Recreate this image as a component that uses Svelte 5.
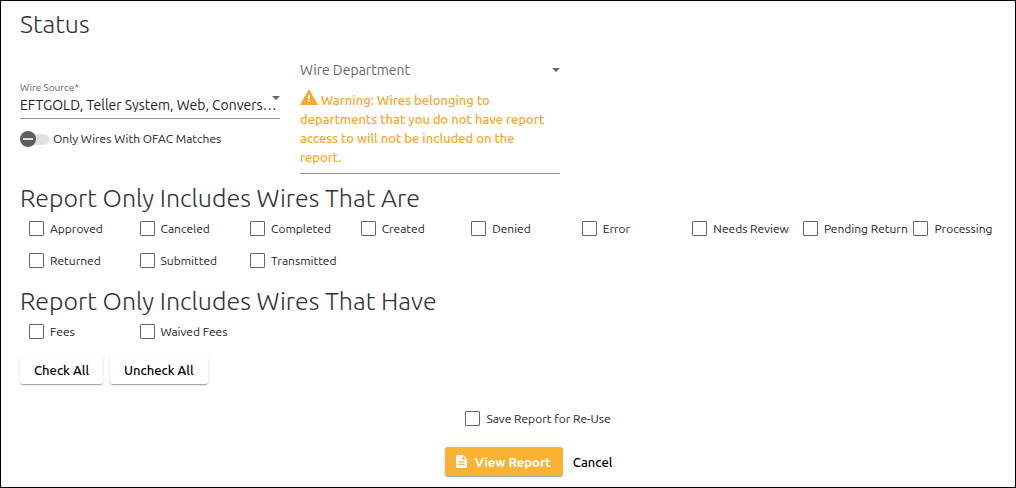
<script>
    let wireSource = $state("all");
    let wireDepartment = $state("");
    let ofacOnly = $state(false);
    let saveReport = $state(false);

    let statuses = $state([
        { id: "approved", name: "Approved", checked: false },
        { id: "canceled", name: "Canceled", checked: false },
        { id: "completed", name: "Completed", checked: false },
        { id: "created", name: "Created", checked: false },
        { id: "denied", name: "Denied", checked: false },
        { id: "error", name: "Error", checked: false },
        { id: "needsReview", name: "Needs Review", checked: false },
        { id: "pendingReturn", name: "Pending Return", checked: false },
        { id: "processing", name: "Processing", checked: false },
        { id: "returned", name: "Returned", checked: false },
        { id: "submitted", name: "Submitted", checked: false },
        { id: "transmitted", name: "Transmitted", checked: false }
    ]);

    let feeTypes = $state([
        { id: "fees", name: "Fees", checked: false },
        { id: "waivedFees", name: "Waived Fees", checked: false }
    ]);

    function setAll(value) {
        statuses.forEach((s) => (s.checked = value));
        feeTypes.forEach((f) => (f.checked = value));
    }
</script>

{#snippet arrow()}
    <svg class="arrow" viewBox="0 0 8 4" aria-hidden="true"><path d="M0 0h8L4 4z" /></svg>
{/snippet}

<main class="report">
    <h2>Status</h2>

    <div class="filters">
        <div class="filter source">
            <label class="floating" for="wireSource">Wire Source*</label>
            <div class="selectBox">
                <select id="wireSource" bind:value={wireSource}>
                    <option value="all">EFTGOLD, Teller System, Web, Conversion</option>
                </select>
                {@render arrow()}
            </div>
            <label class="toggle">
                <input type="checkbox" role="switch" bind:checked={ofacOnly} />
                <span>Only Wires With OFAC Matches</span>
            </label>
        </div>

        <div class="filter department">
            <div class="selectBox">
                <select id="wireDepartment" aria-label="Wire Department" bind:value={wireDepartment}>
                    <option value="">Wire Department</option>
                </select>
                {@render arrow()}
            </div>
            <p class="warning">
                <svg viewBox="0 0 18 16" aria-hidden="true">
                    <path fill="#f9a72b" d="M9 0l9 16H0z" />
                    <path fill="#fff" d="M8 6h2v4H8zM8 11h2v2H8z" />
                </svg>
                Warning: Wires belonging to departments that you do not have report access to will not be included on the report.
            </p>
        </div>
    </div>

    <h2 id="statusHeading">Report Only Includes Wires That Are</h2>
    <div class="checks" role="group" aria-labelledby="statusHeading">
        {#each statuses as status (status.id)}
            <label class="check">
                <input type="checkbox" bind:checked={status.checked} />
                <span>{status.name}</span>
            </label>
        {/each}
    </div>

    <h2 id="feeHeading">Report Only Includes Wires That Have</h2>
    <div class="checks fees" role="group" aria-labelledby="feeHeading">
        {#each feeTypes as fee (fee.id)}
            <label class="check">
                <input type="checkbox" bind:checked={fee.checked} />
                <span>{fee.name}</span>
            </label>
        {/each}
    </div>

    <div class="bulk">
        <button type="button" class="raised" onclick={() => setAll(true)}>Check All</button>
        <button type="button" class="raised" onclick={() => setAll(false)}>Uncheck All</button>
    </div>

    <div class="footer">
        <label class="check">
            <input type="checkbox" bind:checked={saveReport} />
            <span>Save Report for Re-Use</span>
        </label>
        <div class="actions">
            <button type="button" class="raised primary">
                <svg viewBox="0 0 11 13" aria-hidden="true">
                    <path fill="#fff" d="M1.5 0H7l4 4v7.5A1.5 1.5 0 0 1 9.5 13h-8A1.5 1.5 0 0 1 0 11.5v-10A1.5 1.5 0 0 1 1.5 0z" />
                    <path fill="#f9b233" d="M6.3 1v3.7H10zM2.5 6.2h6v1.2h-6zM2.5 8.8h6V10h-6z" />
                </svg>
                View Report
            </button>
            <button type="button" class="flat">Cancel</button>
        </div>
    </div>
</main>

<style>
    :global(body) {
        margin: 0;
        background: #fff;
    }

    .report {
        box-sizing: border-box;
        min-height: 100vh;
        border: 1px solid #000;
        padding: 9px 0 8px 19px;
        font-family: Ubuntu, "Noto Sans", "Open Sans", sans-serif;
        font-size: 12px;
        color: #212121;
    }

    h2 {
        margin: 0;
        font-size: 25px;
        font-weight: 300;
        line-height: 28px;
        color: #333;
    }

    .filters {
        display: flex;
        align-items: flex-start;
        gap: 20px;
        margin-bottom: 10px;
    }

    .filter {
        flex: 0 1 260px;
        min-width: 0;
    }

    .source {
        padding-top: 43px;
    }

    .floating {
        display: block;
        font-size: 10px;
        line-height: 14px;
        color: #666;
    }

    .selectBox {
        position: relative;
    }

    .source .selectBox {
        border-bottom: 1px solid #949494;
    }

    select {
        appearance: none;
        display: block;
        width: 100%;
        height: 20px;
        margin: 0;
        padding: 0 2px 0 0;
        border: 0;
        background: transparent;
        font: inherit;
        font-size: 14px;
        line-height: 20px;
        color: #212121;
        text-overflow: ellipsis;
        overflow: hidden;
        white-space: nowrap;
    }

    .source select {
        height: 23px;
        padding-bottom: 6px;
    }

    .arrow {
        position: absolute;
        right: 0;
        top: 8px;
        width: 8px;
        height: 4px;
        fill: #666;
        pointer-events: none;
    }

    .source .arrow {
        top: 1px;
    }

    .toggle {
        display: inline-flex;
        align-items: center;
        gap: 4px;
        margin-top: 12px;
        line-height: 16px;
    }

    .toggle input {
        appearance: none;
        position: relative;
        width: 29px;
        height: 11px;
        margin: 0;
        border-radius: 6px;
        background: #e0e0e0;
    }

    .toggle input::before {
        content: "";
        position: absolute;
        left: 0;
        top: -3px;
        width: 16px;
        height: 16px;
        border-radius: 50%;
        background: linear-gradient(#e0e0e0, #e0e0e0) center / 10px 2px no-repeat #5f5f5f;
    }

    .toggle input:checked::before {
        left: 12px;
    }

    .department {
        padding-top: 22px;
        border-bottom: 1px solid #949494;
    }

    .department select {
        color: #666;
    }

    .warning {
        margin: 0;
        padding: 9px 6px 6px 0;
        font-size: 13px;
        font-weight: 500;
        line-height: 19px;
        color: #f9a72b;
    }

    .warning svg {
        width: 18px;
        height: 16px;
    }

    .checks {
        display: grid;
        grid-template-columns: repeat(9, minmax(0, 1fr));
        margin-bottom: 11px;
    }

    .checks.fees {
        margin-bottom: 8px;
    }

    .check {
        display: inline-flex;
        align-items: center;
        gap: 6px;
        height: 32px;
        padding-left: 9px;
        white-space: nowrap;
    }

    .check input {
        appearance: none;
        flex: none;
        width: 15px;
        height: 15px;
        margin: 0;
        border: 1px solid #666;
        border-radius: 1px;
        background: #fff;
    }

    .check input:checked {
        background: #f9b233;
    }

    .bulk {
        display: flex;
        gap: 7px;
    }

    button {
        height: 29px;
        padding: 0 14px;
        border: 0;
        border-radius: 3px;
        background: #fff;
        font: inherit;
        font-size: 13px;
        font-weight: 500;
        color: #000;
        cursor: pointer;
    }

    .raised {
        box-shadow: 0 2px 1px -1px rgba(0, 0, 0, 0.2), 0 1px 1px rgba(0, 0, 0, 0.14), 0 1px 3px rgba(0, 0, 0, 0.12);
    }

    .footer {
        display: flex;
        flex-direction: column;
        align-items: center;
        gap: 13px;
        margin-top: 18px;
        padding-left: 32px;
    }

    .actions {
        display: flex;
    }

    .primary {
        display: flex;
        align-items: center;
        gap: 8px;
        padding: 0 12px 0 11px;
        background: #f9b233;
        font-weight: 700;
        color: #fff;
    }

    .primary svg {
        width: 11px;
        height: 13px;
    }

    .flat {
        padding: 0 10px;
    }
</style>
